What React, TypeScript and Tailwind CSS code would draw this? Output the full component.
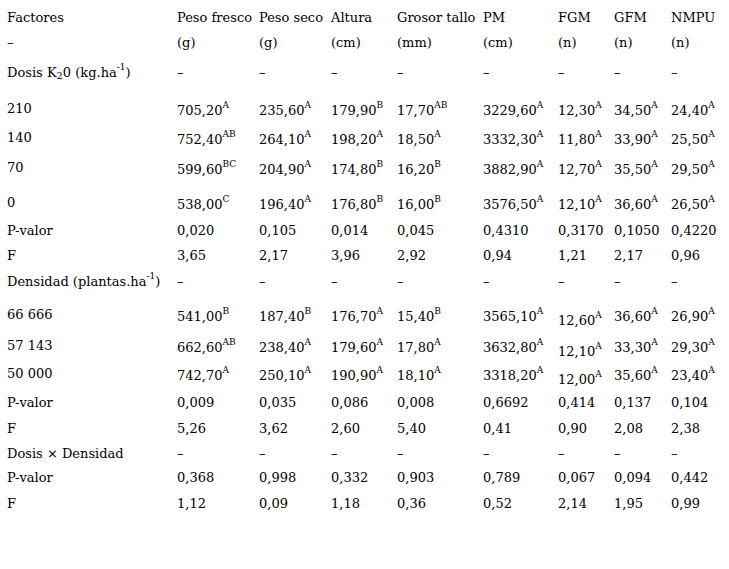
import React from "react";

type Row = {
  label: React.ReactNode;
  cells: string[];
  h: string;
  low?: boolean;
  lowFgm?: boolean;
};

const dash = ["–", "–", "–", "–", "–", "–", "–", "–"];

const rows: Row[] = [
  { label: "Factores", cells: ["Peso fresco", "Peso seco", "Altura", "Grosor tallo", "PM", "FGM", "GFM", "NMPU"], h: "h-[25px]" },
  { label: "–", cells: ["(g)", "(g)", "(cm)", "(mm)", "(cm)", "(n)", "(n)", "(n)"], h: "h-[30px]" },
  {
    label: (
      <>
        Dosis K<sub>2</sub>0 (kg.ha<sup className="text-[9px] top-[-7px]">-1</sup>)
      </>
    ),
    cells: dash,
    h: "h-[36px]",
  },
  { label: "210", cells: ["705,20^A", "235,60^A", "179,90^B", "17,70^AB", "3229,60^A", "12,30^A", "34,50^A", "24,40^A"], h: "h-[29px]", low: true },
  { label: "140", cells: ["752,40^AB", "264,10^A", "198,20^A", "18,50^A", "3332,30^A", "11,80^A", "33,90^A", "25,50^A"], h: "h-[30px]", low: true },
  { label: "70", cells: ["599,60^BC", "204,90^A", "174,80^B", "16,20^B", "3882,90^A", "12,70^A", "35,50^A", "29,50^A"], h: "h-[35px]", low: true },
  { label: "0", cells: ["538,00^C", "196,40^A", "176,80^B", "16,00^B", "3576,50^A", "12,10^A", "36,60^A", "26,50^A"], h: "h-[28px]", low: true },
  { label: "P-valor", cells: ["0,020", "0,105", "0,014", "0,045", "0,4310", "0,3170", "0,1050", "0,4220"], h: "h-[25px]" },
  { label: "F", cells: ["3,65", "2,17", "3,96", "2,92", "0,94", "1,21", "2,17", "0,96"], h: "h-[26px]" },
  {
    label: (
      <>
        Densidad (plantas.ha<sup className="text-[9px] top-[-7px]">-1</sup>)
      </>
    ),
    cells: dash,
    h: "h-[33px]",
  },
  { label: "66 666", cells: ["541,00^B", "187,40^B", "176,70^A", "15,40^B", "3565,10^A", "12,60^A", "36,60^A", "26,90^A"], h: "h-[31px]", low: true, lowFgm: true },
  { label: "57 143", cells: ["662,60^AB", "238,40^A", "179,60^A", "17,80^A", "3632,80^A", "12,10^A", "33,30^A", "29,30^A"], h: "h-[28px]", low: true, lowFgm: true },
  { label: "50 000", cells: ["742,70^A", "250,10^A", "190,90^A", "18,10^A", "3318,20^A", "12,00^A", "35,60^A", "23,40^A"], h: "h-[29px]", low: true, lowFgm: true },
  { label: "P-valor", cells: ["0,009", "0,035", "0,086", "0,008", "0,6692", "0,414", "0,137", "0,104"], h: "h-[26px]" },
  { label: "F", cells: ["5,26", "3,62", "2,60", "5,40", "0,41", "0,90", "2,08", "2,38"], h: "h-[25px]" },
  { label: "Dosis × Densidad", cells: dash, h: "h-[24px]" },
  { label: "P-valor", cells: ["0,368", "0,998", "0,332", "0,903", "0,789", "0,067", "0,094", "0,442"], h: "h-[26px]" },
  { label: "F", cells: ["1,12", "0,09", "1,18", "0,36", "0,52", "2,14", "1,95", "0,99"], h: "h-[25px]" },
];

// "705,20^A" -> 705,20 with a superscript letter
function Value({ text }: { text: string }) {
  const [num, letter] = text.split("^");
  return (
    <>
      {num}
      {letter && <sup className="text-[9px] top-[-7px]">{letter}</sup>}
    </>
  );
}

export default function App() {
  return (
    <div className="w-[729px] h-[569px] bg-white text-black pt-[5px] pl-[7px] text-[13px] leading-[25px] font-['DejaVu_Serif',serif]">
      {rows.map((row, i) => (
        <div
          key={i}
          className={`grid grid-cols-[170px_82px_72px_66px_86px_75px_56px_57px_1fr] items-start whitespace-nowrap ${row.h}`}
        >
          <div>{row.label}</div>
          {row.cells.map((c, j) => (
            <div key={j} className={row.lowFgm && j === 5 ? "pt-[6px]" : row.low ? "pt-[2px]" : ""}>
              <Value text={c} />
            </div>
          ))}
        </div>
      ))}
    </div>
  );
}
